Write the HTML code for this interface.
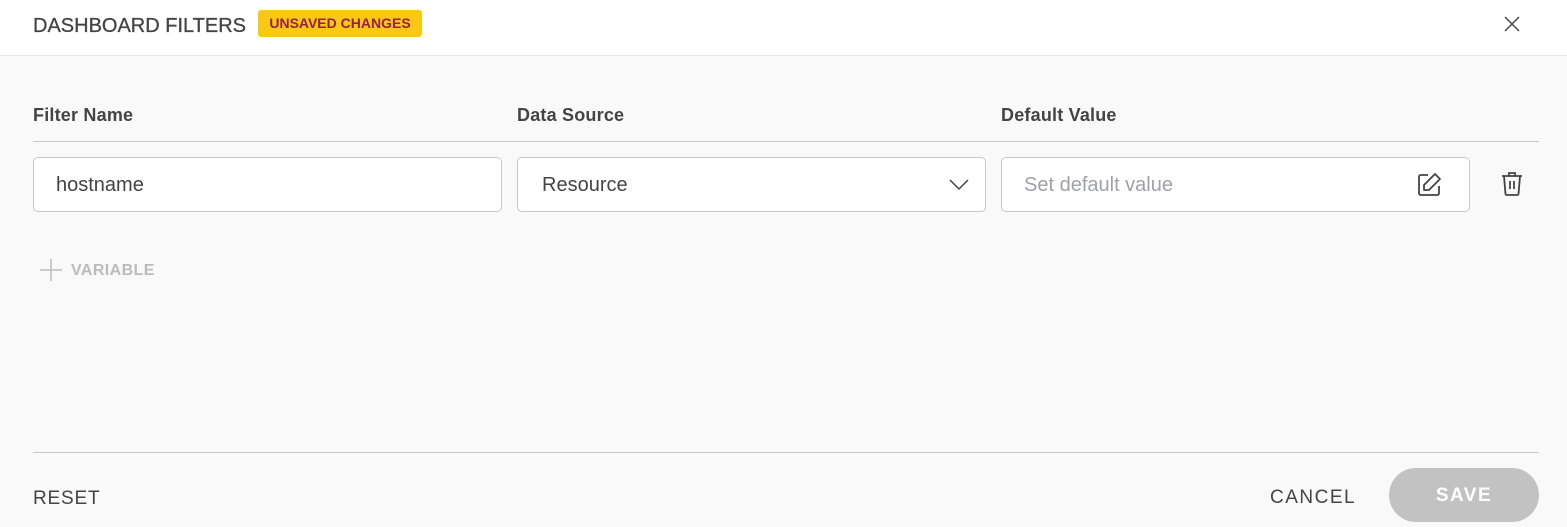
<!DOCTYPE html>
<html><head><style>
*{box-sizing:border-box;margin:0;padding:0}
body{width:1567px;height:527px;background:#f9f9f9;font-family:"Liberation Sans",sans-serif;position:relative;overflow:hidden;color:#444}
.hdr{position:absolute;left:0;top:0;width:1567px;height:56px;background:#fff;border-bottom:1px solid #e6e6e6}
.title{position:absolute;left:33px;top:15px;font-size:20px;color:#444;-webkit-text-stroke:0.3px #444}
.badge{position:absolute;left:258px;top:10px;width:164px;height:27px;background:#f9c813;border-radius:3px;color:#9a1d4a;font-weight:bold;font-size:14px;line-height:27px;text-align:center}
.lbl{position:absolute;top:105px;font-size:18px;font-weight:bold;color:#444;letter-spacing:0.2px}
.line{position:absolute;left:33px;width:1506px;height:1px;background:#c8c8c8}
.inp{position:absolute;top:157px;width:469px;height:55px;background:#fff;border:1px solid #c8c8c8;border-radius:5px;font-size:20px;line-height:54px;padding-left:22px;color:#444}
.btn{position:absolute;font-size:19px;letter-spacing:1.2px;color:#444}
</style></head><body>
<div class="hdr"><div class="title">DASHBOARD FILTERS</div><div class="badge">UNSAVED CHANGES</div>
<svg style="position:absolute;left:1504px;top:16px" width="16" height="16"><path d="M1 1L15 15M15 1L1 15" stroke="#444" stroke-width="1.5"/></svg></div>
<div class="lbl" style="left:33px">Filter Name</div>
<div class="lbl" style="left:517px">Data Source</div>
<div class="lbl" style="left:1001px">Default Value</div>
<div class="line" style="top:141px"></div>
<div class="inp" style="left:33px">hostname</div>
<div class="inp" style="left:517px;padding-left:24px">Resource
<svg style="position:absolute;right:16px;top:21px" width="20" height="12"><path d="M1 1L10 10L19 1" stroke="#444" stroke-width="1.5" fill="none"/></svg></div>
<div class="inp" style="left:1001px;color:#a0a0a8">Set default value
<svg style="position:absolute;right:27px;top:14px" width="26" height="26" viewBox="0 0 26 26"><path d="M12 3H5Q3 3 3 5V21Q3 23 5 23H21Q23 23 23 21V14" stroke="#444" stroke-width="1.8" fill="none"/><path d="M19 2L24 7L13 18H8V13Z" stroke="#444" stroke-width="1.8" fill="none" stroke-linejoin="round"/></svg></div>
<svg style="position:absolute;left:1501px;top:171px" width="22" height="26" viewBox="0 0 22 26"><path d="M1 5H21M8 5V2H14V5M3 5L4.5 23Q4.7 24 6 24H16Q17.3 24 17.5 23L19 5M9 10V18M13 10V18" stroke="#444" stroke-width="1.8" fill="none"/></svg>
<svg style="position:absolute;left:40px;top:259px" width="22" height="22"><path d="M11 0V22M0 11H22" stroke="#bbb" stroke-width="1.5"/></svg>
<div style="position:absolute;left:71px;top:262px;font-size:16px;font-weight:bold;color:#bbb;letter-spacing:0.4px">VARIABLE</div>
<div class="line" style="top:452px"></div>
<div class="btn" style="left:33px;top:488px;letter-spacing:0.8px">RESET</div>
<div class="btn" style="left:1270px;top:487px;letter-spacing:1.5px">CANCEL</div>
<div style="position:absolute;left:1389px;top:468px;width:150px;height:54px;background:#c2c2c2;border-radius:27px;color:#fff;font-weight:bold;font-size:19px;letter-spacing:1.5px;text-align:center;line-height:56px">SAVE</div>
</body></html>
